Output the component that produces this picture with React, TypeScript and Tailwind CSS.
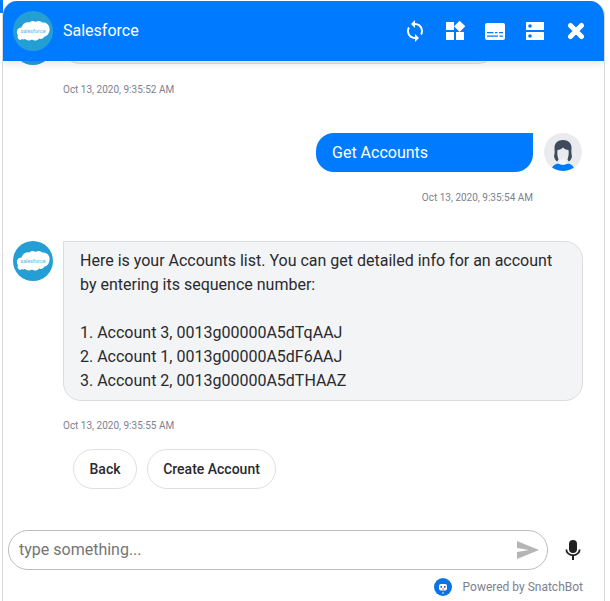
import React from "react";

function SalesforceLogo({ size = 40 }: { size?: number }) {
  return (
    <svg width={size} height={size} viewBox="0 0 40 40" className="shrink-0">
      <circle cx="20" cy="20" r="20" fill="#249fd6" />
      <path
        d="M8 29c-3 0-4-3-3-5-1-1-1.500-2.500-1-4 .5-2.500 2.500-3.500 4.500-3.500 1-3.500 4.500-6 8-5 1.500-1.500 4-2 6-.5 2-1.500 5-1.500 6.500.5 3.500-.5 7 1.500 7.500 5.500.5 4-1.500 8-5 8.500-1 2-3.500 3-5.500 2-1.500 2.500-5 2.500-7 1-2.500 1.500-5.500 1-7-.5-1 .5-2.500.5-3.500 0z"
        fill="#ffffff"
      />
      <text x="20" y="21.800" textAnchor="middle" fontSize="5.400" fontWeight="500" fill="#6cc0e8" fontFamily="Roboto, sans-serif">
        salesforce
      </text>
    </svg>
  );
}

function Sync() {
  return (
    <svg width="24" height="24" viewBox="0 0 24 24" fill="#fff">
      <path d="M12 4V1L8 5l4 4V6c3.310 0 6 2.690 6 6 0 1.010-.25 1.970-.7 2.800l1.460 1.460C19.540 15.030 20 13.570 20 12c0-4.420-3.580-8-8-8zm0 14c-3.310 0-6-2.690-6-6 0-1.010.25-1.970.7-2.800L5.240 7.740C4.460 8.970 4 10.430 4 12c0 4.420 3.580 8 8 8v3l4-4-4-4v3z" />
    </svg>
  );
}

function Widgets() {
  return (
    <svg width="24" height="24" viewBox="0 0 24 24" fill="#fff">
      <path d="M13 13v8h8v-8h-8zM3 21h8v-8H3v8zM3 3v8h8V3H3zm13.660-1.310L11 7.340 16.660 13l5.660-5.660-5.660-5.650z" />
    </svg>
  );
}

function Subtitles() {
  return (
    <svg width="20" height="17" viewBox="0 0 20 17">
      <rect x="0" y="0" width="20" height="17" rx="2" fill="#fff" />
      <path d="M2 9h6.500v1.300H2zM10 9h2.500v1.300H10zM14 9h4v1.300h-4zM2 12.500h11v1.300H2zM14.500 12.500H18v1.300h-3.500z" fill="#007bff" />
    </svg>
  );
}

function Storage() {
  return (
    <svg width="18" height="18" viewBox="0 0 18 18">
      <rect x="0" y="0" width="18" height="8" rx="0.500" fill="#fff" />
      <rect x="0" y="10" width="18" height="8" rx="0.500" fill="#fff" />
      <circle cx="4" cy="4" r="1.800" fill="#007bff" />
      <circle cx="4" cy="14" r="1.800" fill="#007bff" />
    </svg>
  );
}

function Close() {
  return (
    <svg width="18" height="18" viewBox="0 0 18 18">
      <path d="M3.500 3.500l11 11M14.500 3.500l-11 11" stroke="#fff" strokeWidth="5" strokeLinecap="round" />
    </svg>
  );
}

function HeaderIcon({ children }: { children: React.ReactNode }) {
  return <div className="w-[24px] h-[24px] flex items-center justify-center">{children}</div>;
}

function Avatar() {
  return (
    <div className="w-[38px] h-[38px] rounded-full bg-[#e9ebef] overflow-hidden shrink-0">
      <svg width="38" height="38" viewBox="0 0 38 38">
        <path d="M7 38c1-5 4-7 7-7.500 3 1.500 7 1.500 10 0 3 .5 6 2.500 7 7.500z" fill="#007bff" />
        <path d="M14 30.500c1.500-.8 2.500-2 2.500-4h5c0 2 1 3.200 2.500 4-3 1.500-7 1.500-10 0z" fill="#f6f7f9" />
        <path d="M19 7c-5 0-8.500 3-8.500 7.500 0 3 .5 5-.5 9 .5 2 1.500 4 3 5 .5-.5 1-1 1.500-2-1-3-1.500-6-1-9.500 2.500 0 4-1 5.500-2.500 1.500 1.500 3 2.500 5.500 2.500.5 3.500 0 6.500-1 9.500.5 1 1 1.500 1.500 2 1.500-1 2.500-3 3-5-1-4-.5-6-.5-9C27.500 10 24 7 19 7z" fill="#3f4a5c" />
      </svg>
    </div>
  );
}

function Time({ children, className = "" }: { children: React.ReactNode; className?: string }) {
  return <div className={`text-[10px] leading-[12px] text-[#7d7f8f] ${className}`}>{children}</div>;
}

export default function App() {
  return (
    <div className="w-[610px] h-[601px] bg-white overflow-hidden font-['Roboto',sans-serif] relative">
      <div className="absolute left-0 top-0 w-[3px] h-[13px] bg-[#007bff]" />
      <div className="w-[603px] h-[600px] mt-[1px] ml-[2px] rounded-t-[15px] border-x border-[#d8d8d8] flex flex-col overflow-hidden bg-white">
        <div className="h-[60px] shrink-0 bg-[#007bff] flex items-center pl-[10px] pr-[16px] shadow-[0_2px_8px_rgba(0,0,0,0.12)] relative z-10">
          <SalesforceLogo />
          <div className="ml-[10px] text-white text-[16px] flex-1">Salesforce</div>
          <div className="flex items-center gap-[16px]">
            <HeaderIcon><Sync /></HeaderIcon>
            <HeaderIcon><Widgets /></HeaderIcon>
            <HeaderIcon><Subtitles /></HeaderIcon>
            <HeaderIcon><Storage /></HeaderIcon>
            <div className="ml-[1px]"><HeaderIcon><Close /></HeaderIcon></div>
          </div>
        </div>

        <div className="flex-1 flex flex-col relative min-h-0">
          <div className="absolute left-[10px] top-[-36px] w-[40px] h-[40px] rounded-full bg-[#249fd6]" />
          <div className="absolute left-[60px] top-[-30px] w-[432px] h-[33px] rounded-[18px] border border-[#dcdcdf] bg-[#f3f4f6]" />

          <Time className="ml-[60px] mt-[23px]">Oct 13, 2020, 9:35:52 AM</Time>

          <div className="flex justify-end items-start mt-[37px] mr-[22px]">
            <div className="w-[217px] h-[39px] bg-[#007bff] text-white text-[16px] rounded-[18px] rounded-tr-none flex items-center pl-[16px]">
              Get Accounts
            </div>
            <div className="ml-[11px]">
              <Avatar />
            </div>
          </div>
          <Time className="text-right mr-[71px] mt-[20px]">Oct 13, 2020, 9:35:54 AM</Time>

          <div className="flex items-start mt-[37px] ml-[10px]">
            <SalesforceLogo />
            <div className="ml-[10px] w-[520px] h-[160px] bg-[#f3f4f6] border border-[#dcdcdf] rounded-[18px] rounded-tl-none px-[16px] pt-[7px] text-[16px] leading-[24px] text-[#2a2a2e]">
              <div>Here is your Accounts list. You can get detailed info for an account</div>
              <div>by entering its sequence number:</div>
              <div className="h-[24px]" />
              <div>1. Account 3, 0013g00000A5dTqAAJ</div>
              <div>2. Account 1, 0013g00000A5dF6AAJ</div>
              <div>3. Account 2, 0013g00000A5dTHAAZ</div>
            </div>
          </div>
          <Time className="ml-[60px] mt-[19px]">Oct 13, 2020, 9:35:55 AM</Time>

          <div className="flex gap-[10px] ml-[70px] mt-[17px]">
            <div className="w-[64px] h-[40px] rounded-full border border-[#dfdfdf] flex items-center justify-center text-[14px] font-medium text-[#2a2a2e]">Back</div>
            <div className="w-[129px] h-[40px] rounded-full border border-[#dfdfdf] flex items-center justify-center text-[14px] font-medium text-[#2a2a2e]">Create Account</div>
          </div>

          <div className="flex items-center ml-[5px] mt-[41px]">
            <div className="w-[540px] h-[40px] rounded-full border border-[#bdbdbd] flex items-center pl-[10px] pr-[8px]">
              <span className="flex-1 text-[16px] text-[#757575]">type something...</span>
              <svg width="22" height="18" viewBox="0 0 22 18"><path d="M0 0l22 9L0 18V11l12-2L0 7z" fill="#b5b5b5" /></svg>
            </div>
            <svg className="ml-[16px]" width="18" height="20" viewBox="0 0 18 20" fill="#212121">
              <rect x="5" y="0" width="8" height="13" rx="4" />
              <path d="M1.500 9.500h1.800c0 3 2.600 4.800 5.700 4.800s5.700-1.800 5.700-4.800h1.800c0 3.400-2.800 6-6.500 6.400V20H8v-4.100C4.300 15.500 1.500 12.900 1.500 9.500z" />
            </svg>
          </div>

          <div className="flex items-center justify-end mr-[21px] mt-[8px]">
            <svg width="18" height="18" viewBox="0 0 18 18">
              <circle cx="9" cy="9" r="9" fill="#0a74e6" />
              <path d="M4 4l2.500 2M14 4l-2.500 2" stroke="#0a74e6" strokeWidth="2" />
              <rect x="5" y="6" width="8" height="6.500" rx="2" fill="#fff" />
              <circle cx="7.200" cy="8.800" r="0.900" fill="#33363f" />
              <circle cx="10.800" cy="8.800" r="0.900" fill="#33363f" />
              <rect x="8" y="10.500" width="2" height="1" fill="#e8606a" />
              <circle cx="9" cy="15" r="1" fill="#9cc8f5" />
            </svg>
            <span className="ml-[11px] text-[12px] text-[#7d7f8f]">Powered by SnatchBot</span>
          </div>
        </div>
      </div>
    </div>
  );
}
